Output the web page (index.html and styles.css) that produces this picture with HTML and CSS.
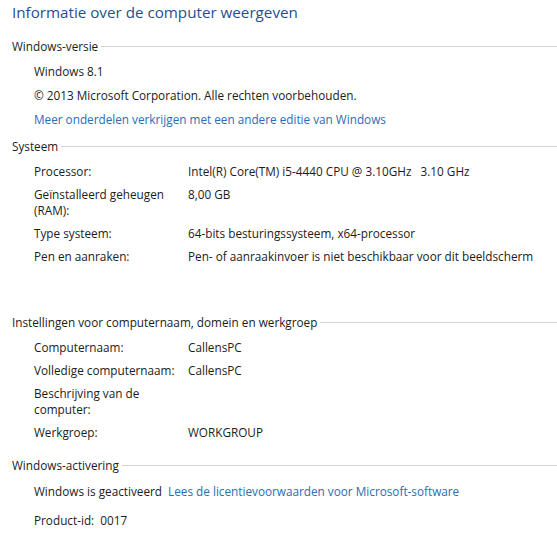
FILE: index.html
```html
<!DOCTYPE html>
<html lang="nl">
<head>
    <meta charset="UTF-8">
    <title>Systeem</title>
    <link rel="stylesheet" href="styles.css">
</head>
<body>
    <div class="page">
        <h1 class="title">Informatie over de computer weergeven</h1>

        <!-- Windows-versie -->
        <section class="group">
            <h2 class="group-head"><span>Windows-versie</span></h2>
            <div class="lines">
                <div class="line">Windows 8.1</div>
                <div class="line">© 2013 Microsoft Corporation. Alle rechten voorbehouden.</div>
                <div class="line"><a class="link" href="#">Meer onderdelen verkrijgen met een andere editie van Windows</a></div>
            </div>
        </section>

        <!-- Systeem -->
        <section class="group group-system">
            <h2 class="group-head"><span>Systeem</span></h2>
            <div class="props">
                <div class="prop">Processor:</div>
                <div class="val">Intel(R) Core(TM) i5-4440 CPU @ 3.10GHz &nbsp; 3.10 GHz</div>
                <div class="prop">Geïnstalleerd geheugen (RAM):</div>
                <div class="val">8,00 GB</div>
                <div class="prop">Type systeem:</div>
                <div class="val">64-bits besturingssysteem, x64-processor</div>
                <div class="prop">Pen en aanraken:</div>
                <div class="val">Pen- of aanraakinvoer is niet beschikbaar voor dit beeldscherm</div>
            </div>
        </section>

        <!-- Computernaam -->
        <section class="group group-name">
            <h2 class="group-head"><span>Instellingen voor computernaam, domein en werkgroep</span></h2>
            <div class="props">
                <div class="prop">Computernaam:</div>
                <div class="val">CallensPC</div>
                <div class="prop nowrap">Volledige computernaam:</div>
                <div class="val">CallensPC</div>
                <div class="prop">Beschrijving van de computer:</div>
                <div class="val"></div>
                <div class="prop">Werkgroep:</div>
                <div class="val">WORKGROUP</div>
            </div>
        </section>

        <!-- Activering -->
        <section class="group group-activation">
            <h2 class="group-head"><span>Windows-activering</span></h2>
            <div class="lines lines-activation">
                <div class="line">Windows is geactiveerd &nbsp;<a class="link" href="#">Lees de licentievoorwaarden voor Microsoft-software</a></div>
                <div class="line line-last">Product-id: &nbsp;0017</div>
            </div>
        </section>
    </div>
</body>
</html>
```

FILE: styles.css
```css
body {
    margin: 0;
    background-color: #ffffff;
    font-family: 'Open Sans', sans-serif;
    font-size: 11.75px;
    color: #1c1c1c;
}

.page {
    padding-left: 12px;
}

.title {
    margin: 0 0 12px 0;
    font-size: 15.2px;
    font-weight: normal;
    color: #1f4f8f;
    line-height: 24px;
}

.group-head {
    display: flex;
    align-items: center;
    margin: 0;
    font-size: 11.75px;
    font-weight: normal;
    line-height: 20px;
}

.group-head::after {
    content: "";
    flex: 1;
    border-top: 1px solid #d4d4d4;
    margin-left: 3px;
}

.lines {
    padding: 3px 0 0 22px;
}

.line {
    line-height: 24px;
}

.lines-activation {
    padding-top: 4px;
}

.line-last {
    margin-top: 5px;
}

.link {
    color: #2a6db3;
    text-decoration: none;
}

.props {
    display: grid;
    grid-template-columns: 154px 1fr;
    padding: 7px 0 0 22px;
    row-gap: 7px;
    line-height: 16px;
}

.prop {
    padding-right: 10px;
}

.nowrap {
    white-space: nowrap;
}

.group-system {
    margin-top: 5px;
}

.group-name {
    margin-top: 48px;
}

.group-activation {
    margin-top: 15px;
}
```
